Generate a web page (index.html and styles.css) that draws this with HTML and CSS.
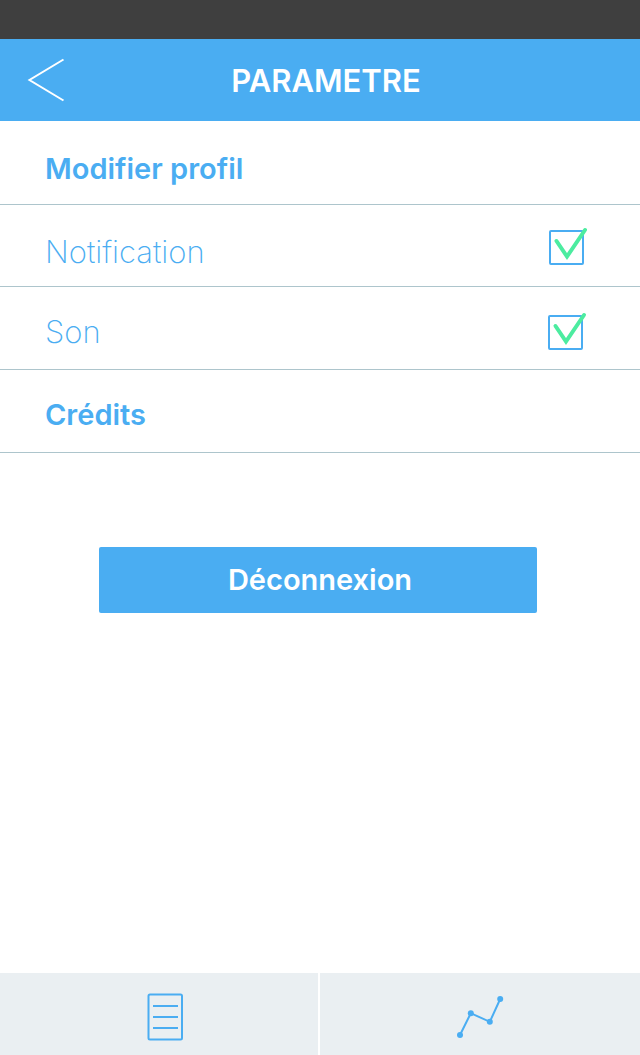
FILE: index.html
```html
<!DOCTYPE html>
<html lang="fr">
<head>
<meta charset="utf-8">
<meta name="viewport" content="width=device-width, initial-scale=1">
<title>Paramètre</title>
<link rel="stylesheet" href="styles.css">
</head>
<body>
<div class="app">
  <div class="status-bar"></div>
  <header class="header">
    <button class="back" type="button" aria-label="Retour">
      <svg width="38" height="44" viewBox="0 0 38 44" fill="none" stroke="#fff" stroke-width="2"><path d="M36.500 1.500 2.500 22 36.500 42.500"/></svg>
    </button>
    <h1 class="title">PARAMETRE</h1>
  </header>
  <main class="content">
    <ul class="settings">
      <li class="row row-first"><a class="row-link" href="#profil">Modifier profil</a></li>
      <li class="row row-option">
        <label class="row-label" for="notification">Notification</label>
        <span class="check">
          <input class="check-box" type="checkbox" id="notification" checked>
          <svg class="check-mark" width="38" height="38" viewBox="0 0 38 38"><path d="M7.500 14 18 29.500 36 3"/></svg>
        </span>
      </li>
      <li class="row row-sound">
        <label class="row-label" for="son">Son</label>
        <span class="check">
          <input class="check-box" type="checkbox" id="son" checked>
          <svg class="check-mark" width="38" height="38" viewBox="0 0 38 38"><path d="M7.500 14 18 29.500 36 3"/></svg>
        </span>
      </li>
      <li class="row"><a class="row-link" href="#credits">Crédits</a></li>
    </ul>
    <button class="logout" type="button">Déconnexion</button>
  </main>
  <nav class="tabs">
    <a class="tab" href="#liste" aria-label="Liste">
      <svg class="list-icon" width="36" height="48" viewBox="0 0 36 48" fill="none" stroke="#4aadf2" stroke-width="2"><rect x="1.500" y="1.500" width="33.500" height="45" rx="1.500"/><path d="M6 13H31M6 24H31M6 35H31"/></svg>
    </a>
    <a class="tab" href="#statistiques" aria-label="Statistiques">
      <svg width="48" height="44" viewBox="0 0 48 44" fill="#4aadf2"><path d="M4 40 14.800 18.200 33.800 26.800 44.200 4" fill="none" stroke="#4aadf2" stroke-width="2"/><circle cx="4" cy="40" r="3"/><circle cx="14.800" cy="18.200" r="3"/><circle cx="33.800" cy="26.800" r="3"/><circle cx="44.200" cy="4" r="3"/></svg>
    </a>
  </nav>
</div>
</body>
</html>
```
FILE: styles.css
```css
* {
  box-sizing: border-box;
}

body {
  margin: 0;
  background: #fff;
  color: #4aadf2;
  font-family: Inter, "Liberation Sans", sans-serif;
  font-size: 29px;
  line-height: 36px;
}

.app {
  display: flex;
  flex-direction: column;
  min-height: 100vh;
}

.status-bar {
  height: 39px;
  background: #3f3f3f;
}

.header {
  display: grid;
  grid-template-columns: 92px 1fr 80px;
  align-items: center;
  height: 82px;
  background: #4aadf2;
  color: #fff;
}

.back {
  display: flex;
  margin: 0;
  padding: 0 0 0 27px;
  border: 0;
  background: none;
}

.title {
  margin: 0;
  padding-top: 2px;
  font-size: 31px;
  font-weight: 600;
  text-align: center;
}

.content {
  flex: 1;
  display: flex;
  flex-direction: column;
}

.settings {
  margin: 0;
  padding: 0;
  list-style: none;
}

.row {
  display: flex;
  align-items: center;
  justify-content: space-between;
  height: 83px;
  padding: 8px 56px 0 45px;
  border-bottom: 1px solid #adc5cc;
}

.row-first {
  height: 84px;
  padding-top: 12px;
}

.row-option {
  height: 82px;
  padding-top: 4px;
}

.row-option .row-label {
  padding-top: 8px;
}

.row-sound {
  padding-right: 57px;
}

.row-link {
  color: inherit;
  font-weight: 600;
  text-decoration: none;
}

.row-label {
  font-size: 31px;
  font-weight: 200;
}

.check {
  position: relative;
  display: flex;
}

.check-box {
  appearance: none;
  width: 35px;
  height: 35px;
  margin: 0;
  border: 2px solid #4aadf2;
  border-radius: 2px;
}

.check-mark {
  position: absolute;
  left: 0;
  bottom: 0;
  overflow: visible;
  fill: none;
  stroke: #4ceca0;
  stroke-width: 4;
  stroke-linecap: round;
  pointer-events: none;
}

.check-box:not(:checked) + .check-mark {
  display: none;
}

.logout {
  height: 66px;
  margin: 94px 103px 40px 99px;
  padding: 0 0 0 4px;
  border: 0;
  border-radius: 2px;
  background: #4aadf2;
  color: #fff;
  font: inherit;
  font-weight: 600;
}

.tabs {
  display: grid;
  grid-template-columns: 159fr 160fr;
  gap: 2px;
  height: 82px;
}

.tab {
  display: flex;
  align-items: center;
  justify-content: center;
  padding-top: 6px;
  background: #eaeff2;
}

.list-icon {
  margin-left: 12px;
}
```
